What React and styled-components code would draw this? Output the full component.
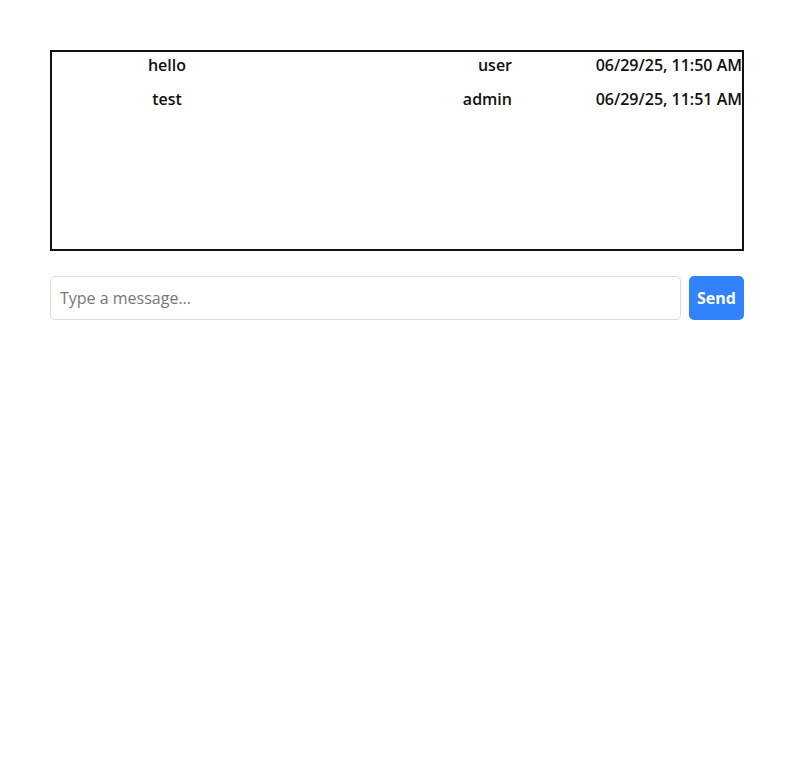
import React from "react";
import styled, { createGlobalStyle } from "styled-components";

const GlobalStyle = createGlobalStyle`
  body {
    margin: 0;
    background: #fff;
    font-family: "Open Sans", "Noto Sans", sans-serif;
  }
`;

const Page = styled.div`
  padding: 50px;
  display: flex;
  flex-direction: column;
  gap: 25px;
`;

const MessageBox = styled.div`
  height: 201px;
  box-sizing: border-box;
  border: 2px solid #111;
  overflow: hidden;
`;

const MessageList = styled.div`
  display: grid;
  grid-template-columns: repeat(3, 1fr);
  row-gap: 12px;
  padding-top: 2px;
`;

const Cell = styled.div`
  font-size: 16px;
  font-weight: 600;
  line-height: 22px;
  color: #111;
  text-align: ${(p) => p.$align || "left"};
  white-space: nowrap;
`;

const Composer = styled.form`
  display: flex;
  gap: 8px;
  height: 44px;
`;

const Input = styled.input`
  flex: 1;
  box-sizing: border-box;
  border: 1px solid #ddd;
  border-radius: 5px;
  padding: 0 9px;
  font-family: inherit;
  font-size: 16px;
  color: #222;
  outline: none;

  &::placeholder {
    color: #777;
  }
`;

const SendButton = styled.button`
  width: 55px;
  border: none;
  border-radius: 5px;
  background: #3282fb;
  color: #fff;
  font-family: inherit;
  font-size: 16px;
  font-weight: 700;
  cursor: pointer;
`;

const messages = [
  { id: 1, text: "hello", user: "user", time: "06/29/25, 11:50 AM" },
  { id: 2, text: "test", user: "admin", time: "06/29/25, 11:51 AM" },
];

export default function App() {
  return (
    <>
      <GlobalStyle />
      <Page>
        <MessageBox>
          <MessageList>
            {messages.map((m) => (
              <React.Fragment key={m.id}>
                <Cell $align="center">{m.text}</Cell>
                <Cell $align="right">{m.user}</Cell>
                <Cell $align="right">{m.time}</Cell>
              </React.Fragment>
            ))}
          </MessageList>
        </MessageBox>
        <Composer onSubmit={(e) => e.preventDefault()}>
          <Input placeholder="Type a message..." />
          <SendButton type="submit">Send</SendButton>
        </Composer>
      </Page>
    </>
  );
}
